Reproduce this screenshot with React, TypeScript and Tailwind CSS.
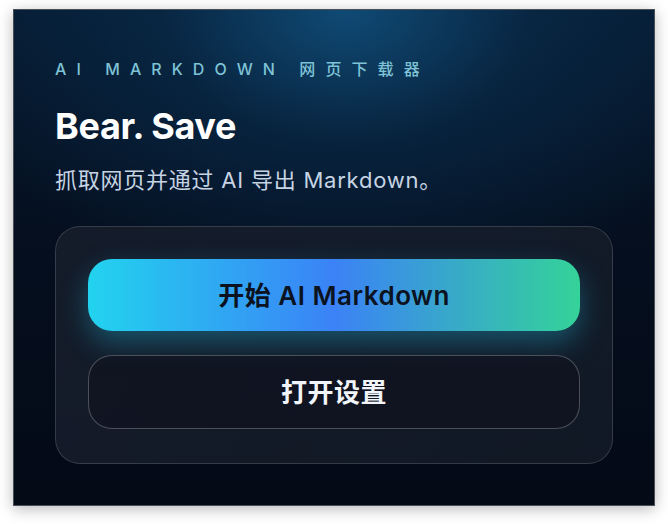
export default function App() {
  return (
    <div className="min-h-[524px] bg-white pl-[13px] pt-[9px] font-['Inter','Noto_Sans_CJK_SC',sans-serif]">
      <div className="h-[497px] w-[642px] border border-[#4a4f57] bg-[radial-gradient(ellipse_65%_60%_at_52%_0%,rgba(18,86,134,0.8)_0%,rgba(10,52,88,0.45)_45%,transparent_100%),linear-gradient(180deg,#061a30_0%,#050f1f_45%,#040a16_100%)] px-[41px] pt-[47px] shadow-[0_3px_14px_rgba(0,0,0,0.28)]">
        <p className="text-[16px] font-medium leading-[24px] tracking-[0.63em] text-[#7ec2d6]">AI MARKDOWN 网页下载器</p>
        <h1 className="mt-[24px] text-[36px] font-bold leading-[42px] tracking-[-0.01em] text-white">Bear. Save</h1>
        <p className="mt-[18px] text-[22px] leading-[30px] tracking-[0.035em] text-[#c6d4e4]">抓取网页并通过 AI 导出 Markdown。</p>

        <div className="mt-[31px] rounded-[25px] border border-white/15 bg-[linear-gradient(120deg,rgba(24,30,44,0.85),rgba(22,30,42,0.75))] px-8 pt-8 pb-[34px]">
          <button className="flex h-[72px] w-full items-center justify-center rounded-[24px] bg-[linear-gradient(90deg,#22d3ee_0%,#3b82f6_50%,#34d399_100%)] text-[26px] font-semibold tracking-[0.02em] text-[#0b1220] shadow-[0_12px_28px_rgba(34,190,230,0.35)]">
            开始 AI Markdown
          </button>
          <button className="mt-[24px] flex h-[74px] w-full items-center justify-center rounded-[24px] border border-white/25 bg-[#0f1320]/70 text-[26px] font-semibold tracking-[0.02em] text-[#f1f5f9]">
            打开设置
          </button>
        </div>
      </div>
    </div>
  );
}
